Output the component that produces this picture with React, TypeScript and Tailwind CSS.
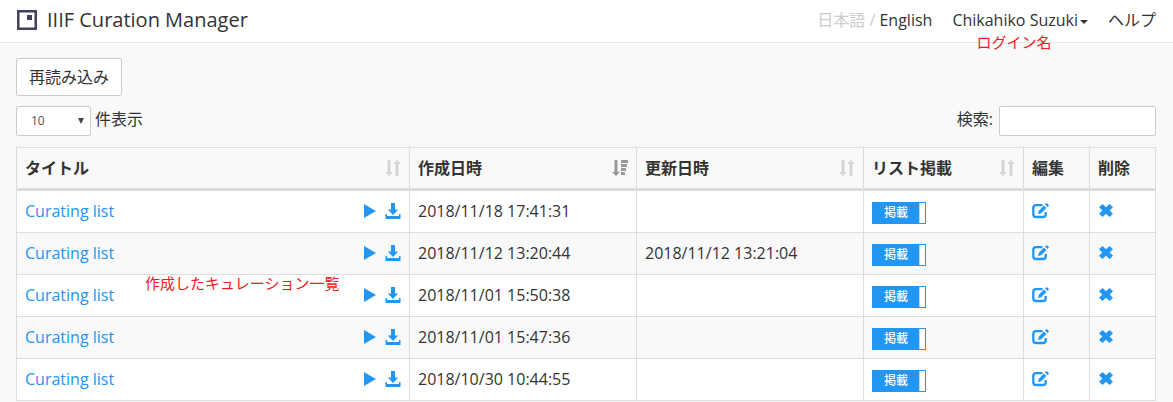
import { useState } from "react";

interface Curation {
  id: number;
  title: string;
  created: string;
  updated: string;
}

const curations: Curation[] = [
  { id: 1, title: "Curating list", created: "2018/11/18 17:41:31", updated: "" },
  { id: 2, title: "Curating list", created: "2018/11/12 13:20:44", updated: "2018/11/12 13:21:04" },
  { id: 3, title: "Curating list", created: "2018/11/01 15:50:38", updated: "" },
  { id: 4, title: "Curating list", created: "2018/11/01 15:47:36", updated: "" },
  { id: 5, title: "Curating list", created: "2018/10/30 10:44:55", updated: "" },
];

function Logo() {
  return (
    <svg width="20" height="20" viewBox="0 0 20 20" aria-hidden="true">
      <path fill="#404060" fillRule="evenodd" d="M0 0h20v20H0zM2.500 2.500v15h15v-15z" />
      <path fill="#404060" d="M10 5h5v5h-5z" />
    </svg>
  );
}

function SortIcon() {
  return (
    <svg width="16" height="16" viewBox="0 0 16 16" fill="currentColor" aria-hidden="true">
      <path d="M2.500 0h3v12H8l-4 4-4-4h2.500zM10.500 16h3V4H16l-4-4-4 4h2.500z" />
    </svg>
  );
}

function SortDescIcon() {
  return (
    <svg width="16" height="16" viewBox="0 0 16 16" fill="currentColor" aria-hidden="true">
      <path d="M2.500 0h3v12H8l-4 4-4-4h2.500z" />
      <path d="M9 0h7v3H9zM9 4h6v3H9zM9 8h5v3H9zM9 12h4v3H9z" />
    </svg>
  );
}

function PlayIcon() {
  return (
    <svg width="12" height="14" viewBox="0 0 12 14" fill="currentColor" aria-hidden="true">
      <path d="M0 0 12 7 0 14z" />
    </svg>
  );
}

function DownloadIcon() {
  return (
    <svg width="16" height="16" viewBox="0 0 16 16" fill="currentColor" aria-hidden="true">
      <path d="M6 0h4v6.500h3.200L8 12 2.800 6.500H6z" />
      <path d="M.5 11H2v2h12v-2h1.500v5H.5z" />
    </svg>
  );
}

function EditIcon() {
  return (
    <svg width="17" height="16" viewBox="0 0 17 16" aria-hidden="true">
      <path
        d="M10.500 2.200H4Q1.300 2.200 1.300 5v6.200Q1.300 14 4 14h7q2.700 0 2.700-2.800V9"
        fill="none"
        stroke="currentColor"
        strokeWidth="2.300"
      />
      <path fill="currentColor" d="m6 11 .8-3.200L12 2.600l2.400 2.400-5.200 5.200zM13 1.400 14.200.2h.8l1.800 1.800v.8L15.600 4z" />
    </svg>
  );
}

function RemoveIcon() {
  return (
    <svg width="14" height="13" viewBox="0 0 14 13" fill="currentColor" aria-hidden="true">
      <path d="M3.500 0 7 3.300 10.500 0 14 3.200 10.600 6.500 14 9.800 10.500 13 7 9.700 3.500 13 0 9.800l3.400-3.300L0 3.200z" />
    </svg>
  );
}

function HeaderCell({ label, sort }: { label: string; sort?: "none" | "desc" }) {
  return (
    <th
      scope="col"
      aria-sort={sort === "desc" ? "descending" : undefined}
      className="h-[43px] border-r border-b-[3px] border-[#ddd] px-2 text-left font-bold"
    >
      <div className="flex items-center justify-between">
        <span>{label}</span>
        {sort === "none" && (
          <span className="text-[#d5d5d5]">
            <SortIcon />
          </span>
        )}
        {sort === "desc" && (
          <span className="text-[#999]">
            <SortDescIcon />
          </span>
        )}
      </div>
    </th>
  );
}

function ListedToggle({ title }: { title: string }) {
  const [listed, setListed] = useState(true);

  return (
    <label className="relative mt-1 flex h-[22px] w-[54px] cursor-pointer border border-[#2196f3] bg-[#2196f3] text-xs text-white">
      <input
        type="checkbox"
        checked={listed}
        onChange={(e) => setListed(e.target.checked)}
        aria-label={`${title} リスト掲載`}
        className="sr-only"
      />
      <span className="flex flex-1 items-center justify-center font-medium">{listed ? "掲載" : "非掲載"}</span>
      <span className="w-[6px] border-l border-[#b9dcfa] bg-white" />
    </label>
  );
}

export default function App() {
  const [pageSize, setPageSize] = useState("10");
  const [query, setQuery] = useState("");
  const rows = curations.filter((c) => `${c.title} ${c.created} ${c.updated}`.includes(query));

  return (
    <div className="min-h-screen bg-[#f9f9f9] font-['Open_Sans','Noto_Sans_CJK_JP',sans-serif] text-base text-[#333]">
      <header className="flex h-[43px] items-center justify-between border-b border-[#e7e7e7] bg-white px-[17px]">
        <a href="#" className="flex items-center gap-[10px] pb-0.5 text-xl">
          <Logo />
          IIIF Curation Manager
        </a>
        <nav className="flex items-center gap-5 pb-0.5">
          <div className="text-[#ccc]">
            日本語 / <a href="#" className="text-[#333]">English</a>
          </div>
          <div className="relative">
            <button type="button" className="flex items-center gap-[2px]">
              Chikahiko Suzuki
              <svg width="8" height="4" viewBox="0 0 8 4" fill="currentColor" className="mt-1" aria-hidden="true">
                <path d="M0 0h8L4 4z" />
              </svg>
            </button>
            <span className="absolute top-6 left-6 text-[15px] leading-5 whitespace-nowrap text-[#ed1c24]">
              ログイン名
            </span>
          </div>
          <a href="#">ヘルプ</a>
        </nav>
      </header>

      <main className="pt-[15px] pr-[17px] pl-4">
        <button type="button" className="h-[38px] rounded-xs border border-[#ccc] bg-white px-3">
          再読み込み
        </button>

        <div className="mt-[10px] flex justify-between">
          <label className="flex gap-1">
            <span className="relative">
              <select
                value={pageSize}
                onChange={(e) => setPageSize(e.target.value)}
                className="h-[30px] w-[75px] appearance-none rounded-xs border border-[#ccc] bg-white pl-[14px] text-xs text-[#555]"
              >
                <option>10</option>
                <option>25</option>
                <option>50</option>
                <option>100</option>
              </select>
              <svg
                width="6"
                height="6"
                viewBox="0 0 6 6"
                fill="#444"
                className="pointer-events-none absolute top-3 right-[7px]"
                aria-hidden="true"
              >
                <path d="M0 0h6L3 6z" />
              </svg>
            </span>
            <span className="leading-[26px]">件表示</span>
          </label>
          <label className="flex gap-[6px]">
            <span className="leading-[26px]">検索:</span>
            <input
              type="search"
              value={query}
              onChange={(e) => setQuery(e.target.value)}
              className="h-[30px] w-[157px] rounded-xs border border-[#ccc] bg-white px-2 text-xs"
            />
          </label>
        </div>

        <div className="relative mt-[11px]">
          <table className="w-full table-fixed border-separate border-spacing-0 border-t border-l border-[#ddd]">
            <colgroup>
              <col />
              <col className="w-[227px]" />
              <col className="w-[227px]" />
              <col className="w-[160px]" />
              <col className="w-[66px]" />
              <col className="w-[66px]" />
            </colgroup>
            <thead>
              <tr>
                <HeaderCell label="タイトル" sort="none" />
                <HeaderCell label="作成日時" sort="desc" />
                <HeaderCell label="更新日時" sort="none" />
                <HeaderCell label="リスト掲載" sort="none" />
                <HeaderCell label="編集" />
                <HeaderCell label="削除" />
              </tr>
            </thead>
            <tbody>
              {rows.map((row) => (
                <tr key={row.id} className="h-[42px] odd:bg-white *:border-r *:border-b *:border-[#ddd] *:px-2 *:pb-0.5">
                  <td>
                    <div className="flex items-center text-[#2196f3]">
                      <a href="#" className="flex-1">
                        {row.title}
                      </a>
                      <button type="button" aria-label="再生" className="mr-[9px]">
                        <PlayIcon />
                      </button>
                      <button type="button" aria-label="ダウンロード">
                        <DownloadIcon />
                      </button>
                    </div>
                  </td>
                  <td>{row.created}</td>
                  <td>{row.updated}</td>
                  <td>
                    <ListedToggle title={row.title} />
                  </td>
                  <td>
                    <button type="button" aria-label="編集" className="block text-[#2196f3]">
                      <EditIcon />
                    </button>
                  </td>
                  <td>
                    <button type="button" aria-label="削除" className="block px-px text-[#2196f3]">
                      <RemoveIcon />
                    </button>
                  </td>
                </tr>
              ))}
            </tbody>
          </table>
          <span className="absolute top-[126px] left-[129px] text-[15px] leading-5 whitespace-nowrap text-[#ed1c24]">
            作成したキュレーション一覧
          </span>
        </div>
      </main>
    </div>
  );
}
